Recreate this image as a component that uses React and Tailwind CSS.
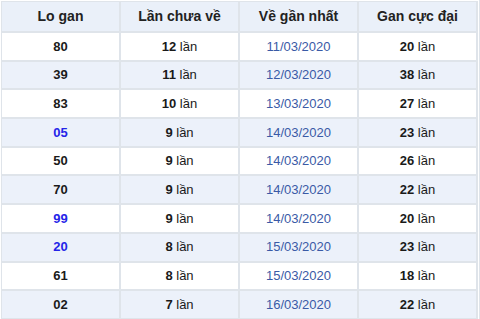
const rows = [
  { lo: "80", blue: false, chua: 12, date: "11/03/2020", max: 20 },
  { lo: "39", blue: false, chua: 11, date: "12/03/2020", max: 38 },
  { lo: "83", blue: false, chua: 10, date: "13/03/2020", max: 27 },
  { lo: "05", blue: true, chua: 9, date: "14/03/2020", max: 23 },
  { lo: "50", blue: false, chua: 9, date: "14/03/2020", max: 26 },
  { lo: "70", blue: false, chua: 9, date: "14/03/2020", max: 22 },
  { lo: "99", blue: true, chua: 9, date: "14/03/2020", max: 20 },
  { lo: "20", blue: true, chua: 8, date: "15/03/2020", max: 23 },
  { lo: "61", blue: false, chua: 8, date: "15/03/2020", max: 18 },
  { lo: "02", blue: false, chua: 7, date: "16/03/2020", max: 22 },
];

const cell =
  "flex items-center justify-center border-r-2 border-b-2 border-[#dfe4ea]";

const App = () => {
  return (
    <div
      className="w-[480px] h-[319px] bg-white border-r border-[#dfe4ea] overflow-hidden"
      style={{ fontFamily: '"Liberation Sans", Arial, sans-serif' }}
    >
      <div className="ml-px mt-px w-[477px] border-l border-t border-[#dfe4ea]">
        <div className="grid grid-cols-4 h-[31px] bg-[#eaf0f9] text-[14px] font-bold text-[#222]">
          <div className={cell}>Lo gan</div>
          <div className={cell}>Lần chưa về</div>
          <div className={cell}>Về gần nhất</div>
          <div className={cell}>Gan cực đại</div>
        </div>
        {rows.map((r, i) => (
          <div
            key={i}
            className={`grid grid-cols-4 h-[28.7px] text-[13px] text-[#1a1a1a] ${
              i % 2 === 1 ? "bg-[#ecf1fa]" : "bg-white"
            }`}
          >
            <div
              className={`${cell} font-bold ${
                r.blue ? "text-[#2424e8]" : "text-[#1a1a1a]"
              }`}
            >
              {r.lo}
            </div>
            <div className={cell}>
              <span>
                <b>{r.chua}</b> lần
              </span>
            </div>
            <div className={`${cell} text-[#3a5aa6]`}>{r.date}</div>
            <div className={cell}>
              <span>
                <b>{r.max}</b> lần
              </span>
            </div>
          </div>
        ))}
      </div>
    </div>
  );
};

export default App;
